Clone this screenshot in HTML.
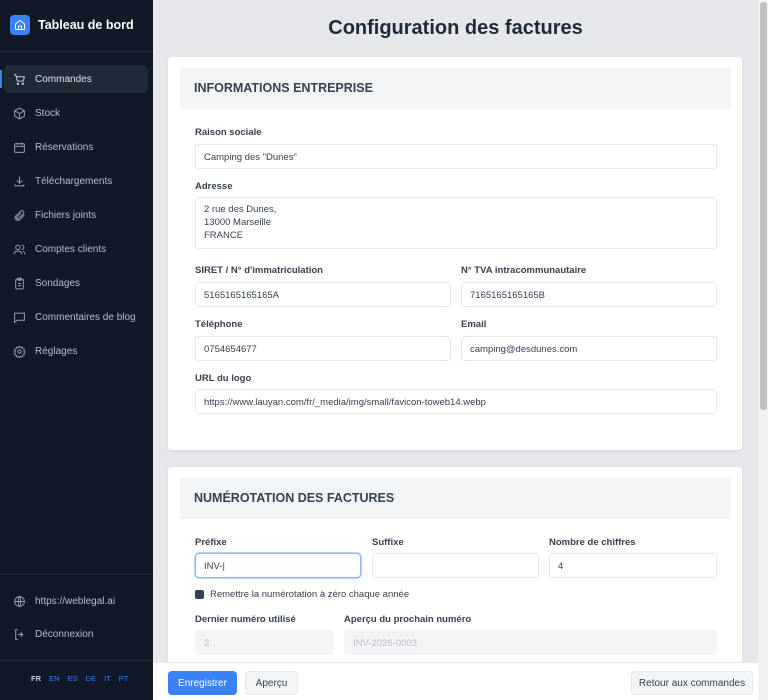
<!DOCTYPE html>
<html><head><meta charset="utf-8"><style>
*{box-sizing:border-box;margin:0;padding:0}
html,body{width:768px;height:700px;overflow:hidden}
body{font-family:"Liberation Sans",sans-serif;background:#e5e7eb;position:relative}
.sb{position:absolute;left:0;top:0;width:153px;height:700px;background:#111827;color:#cbd5e1}
.brand{position:absolute;left:10px;top:15px;display:flex;align-items:center;color:#fff;font-weight:bold;font-size:12.5px}
.brand .ic{width:20px;height:20px;background:#3b82f6;border-radius:4px;margin-right:8px;display:flex;align-items:center;justify-content:center}
.sep{position:absolute;left:0;width:153px;height:1px;background:#1f2937}
.nav{position:absolute;left:4px;width:144px;height:28px;display:flex;align-items:center;font-size:10px;color:#b6bfcc;padding-left:9px}
.nav svg{margin-right:9px}
.nav.act{background:#1f2937;border-radius:5px;color:#e5e7eb}
.bar{position:absolute;left:0;top:70px;width:2px;height:18px;background:#3b82f6}
.langs{position:absolute;top:674px;left:31px;font-size:7.5px;color:#3b82f6;word-spacing:6px}
.langs b{color:#cbd5e1}
h1{position:absolute;left:153px;width:605px;text-align:center;top:17px;font-size:20px;color:#1f2937}
.card{position:absolute;left:168px;width:574px;background:#fff;border-radius:3px;box-shadow:0 1px 2px rgba(0,0,0,.08)}
.hd{position:absolute;left:12px;right:11px;top:11px;height:41px;background:#f3f4f6;font-weight:bold;font-size:12.5px;color:#374151;padding:13px 0 0 14px}
.lb{position:absolute;font-size:9.5px;font-weight:bold;color:#374151}
.in{position:absolute;height:25px;border:1px solid #e5e7eb;border-radius:4px;font-size:9.5px;color:#374151;padding:7px 0 0 8px;background:#fff}
.dis{background:#f3f4f6;color:#b8bcc4;border-color:#f3f4f6}
.ft{position:absolute;left:153px;top:662px;width:605px;height:38px;background:#fff;border-top:1px solid #e5e7eb}
.btn{position:absolute;top:8px;height:24px;border-radius:4px;font-size:10px;display:flex;align-items:center;justify-content:center}
.sc{position:absolute;left:758px;top:0;width:10px;height:700px;background:#f1f1f1}
.th{position:absolute;left:2px;top:2px;width:7px;height:408px;background:#c1c1c1;border-radius:3px}
</style></head><body>
<div class="sb">
 <div class="brand"><div class="ic"><svg width="12" height="12" viewBox="0 0 24 24" fill="none" stroke="#fff" stroke-width="2"><path d="M3 10l9-7 9 7v10a1 1 0 0 1-1 1H4a1 1 0 0 1-1-1z"/><path d="M9 21v-7h6v7"/></svg></div>Tableau de bord</div>
 <div class="sep" style="top:51px"></div>
 <div class="bar"></div>
 <div class="nav act" style="top:65px"><svg width="13" height="13" viewBox="0 0 24 24" fill="none" stroke="#cbd5e1" stroke-width="1.8"><path d="M2 3h3l3 12h11l2-8H6"/><circle cx="9" cy="20" r="1.3"/><circle cx="18" cy="20" r="1.3"/></svg>Commandes</div>
 <div class="nav" style="top:99px"><svg width="13" height="13" viewBox="0 0 24 24" fill="none" stroke="#94a3b8" stroke-width="1.8"><path d="M12 2l9 5v10l-9 5-9-5V7z"/><path d="M3 7l9 5 9-5M12 12v10"/></svg>Stock</div>
 <div class="nav" style="top:133px"><svg width="13" height="13" viewBox="0 0 24 24" fill="none" stroke="#94a3b8" stroke-width="1.8"><rect x="3" y="5" width="18" height="16" rx="2"/><path d="M3 10h18M8 3v4M16 3v4"/></svg>Réservations</div>
 <div class="nav" style="top:167px"><svg width="13" height="13" viewBox="0 0 24 24" fill="none" stroke="#94a3b8" stroke-width="1.8"><path d="M12 3v12M7 10l5 5 5-5M4 17v3h16v-3"/></svg>Téléchargements</div>
 <div class="nav" style="top:201px"><svg width="13" height="13" viewBox="0 0 24 24" fill="none" stroke="#94a3b8" stroke-width="1.8"><path d="M21 11l-9 9a5 5 0 0 1-7-7l9-9a3.5 3.5 0 0 1 5 5l-9 9a2 2 0 0 1-3-3l8-8"/></svg>Fichiers joints</div>
 <div class="nav" style="top:235px"><svg width="13" height="13" viewBox="0 0 24 24" fill="none" stroke="#94a3b8" stroke-width="1.8"><circle cx="9" cy="8" r="4"/><path d="M2 21c0-4 3-6 7-6s7 2 7 6M16 4a4 4 0 0 1 0 8M22 21c0-3-2-5-4-6"/></svg>Comptes clients</div>
 <div class="nav" style="top:269px"><svg width="13" height="13" viewBox="0 0 24 24" fill="none" stroke="#94a3b8" stroke-width="1.8"><rect x="5" y="4" width="14" height="18" rx="2"/><path d="M9 2h6v4H9zM9 12h6M9 16h6"/></svg>Sondages</div>
 <div class="nav" style="top:303px"><svg width="13" height="13" viewBox="0 0 24 24" fill="none" stroke="#94a3b8" stroke-width="1.8"><path d="M3 4h18v13H8l-5 4z"/></svg>Commentaires de blog</div>
 <div class="nav" style="top:337px"><svg width="13" height="13" viewBox="0 0 24 24" fill="none" stroke="#94a3b8" stroke-width="1.8"><circle cx="12" cy="12" r="3"/><path d="M12 2l2 3 3-1 1 3 3 1-1 3 2 2-2 2 1 3-3 1-1 3-3-1-2 3-2-3-3 1-1-3-3-1 1-3-2-2 2-2-1-3 3-1 1-3 3 1z"/></svg>Réglages</div>
 <div class="sep" style="top:574px"></div>
 <div class="nav" style="top:587px"><svg width="13" height="13" viewBox="0 0 24 24" fill="none" stroke="#94a3b8" stroke-width="1.8"><circle cx="12" cy="12" r="9"/><path d="M3 12h18M12 3c3 3 3 15 0 18M12 3c-3 3-3 15 0 18"/></svg>https://weblegal.ai</div>
 <div class="nav" style="top:620px"><svg width="13" height="13" viewBox="0 0 24 24" fill="none" stroke="#94a3b8" stroke-width="1.8"><path d="M9 3H5v18h4M14 8l4 4-4 4M18 12H9"/></svg>Déconnexion</div>
 <div class="sep" style="top:660px"></div>
 <div class="langs"><b>FR</b> EN ES DE IT PT</div>
</div>
<h1>Configuration des factures</h1>
<div class="card" style="top:57px;height:393px">
 <div class="hd">INFORMATIONS ENTREPRISE</div>
 <div class="lb" style="left:27px;top:70px">Raison sociale</div>
 <div class="in" style="left:27px;top:87px;width:522px">Camping des "Dunes"</div>
 <div class="lb" style="left:27px;top:124px">Adresse</div>
 <div class="in" style="left:27px;top:140px;width:522px;height:52px;line-height:13px;padding-top:5px">2 rue des Dunes,<br>13000 Marseille<br>FRANCE</div>
 <div class="lb" style="left:27px;top:208px">SIRET / N° d'immatriculation</div>
 <div class="in" style="left:27px;top:225px;width:256px">5165165165165A</div>
 <div class="lb" style="left:293px;top:208px">N° TVA intracommunautaire</div>
 <div class="in" style="left:293px;top:225px;width:256px">7165165165165B</div>
 <div class="lb" style="left:27px;top:262px">Téléphone</div>
 <div class="in" style="left:27px;top:279px;width:256px">0754654677</div>
 <div class="lb" style="left:293px;top:262px">Email</div>
 <div class="in" style="left:293px;top:279px;width:256px">camping@desdunes.com</div>
 <div class="lb" style="left:27px;top:316px">URL du logo</div>
 <div class="in" style="left:27px;top:332px;width:522px">https://www.lauyan.com/fr/_media/img/small/favicon-toweb14.webp</div>
</div>
<div class="card" style="top:467px;height:233px">
 <div class="hd">NUMÉROTATION DES FACTURES</div>
 <div class="lb" style="left:27px;top:70px">Préfixe</div>
 <div class="in" style="left:27px;top:86px;width:166px;border-color:#93b4f5;box-shadow:0 0 0 1px #bfd3fb">INV-|</div>
 <div class="lb" style="left:204px;top:70px">Suffixe</div>
 <div class="in" style="left:204px;top:86px;width:167px"></div>
 <div class="lb" style="left:381px;top:70px">Nombre de chiffres</div>
 <div class="in" style="left:381px;top:86px;width:168px">4</div>
 <div style="position:absolute;left:27px;top:123px;width:9px;height:9px;background:#374151;border-radius:2px"></div>
 <div style="position:absolute;left:42px;top:122px;font-size:9.5px;color:#374151">Remettre la numérotation à zéro chaque année</div>
 <div class="lb" style="left:27px;top:147px">Dernier numéro utilisé</div>
 <div class="in dis" style="left:27px;top:163px;width:139px">2</div>
 <div class="lb" style="left:176px;top:147px">Aperçu du prochain numéro</div>
 <div class="in dis" style="left:176px;top:163px;width:373px">INV-2026-0003</div>
</div>
<div class="ft">
 <div class="btn" style="left:15px;width:69px;background:#3b82f6;color:#fff">Enregistrer</div>
 <div class="btn" style="left:92px;width:53px;background:#f3f4f6;border:1px solid #e5e7eb;color:#374151">Aperçu</div>
 <div class="btn" style="left:478px;width:122px;background:#f3f4f6;border:1px solid #e5e7eb;color:#374151">Retour aux commandes</div>
</div>
<div class="sc"><div class="th"></div></div>
</body></html>
